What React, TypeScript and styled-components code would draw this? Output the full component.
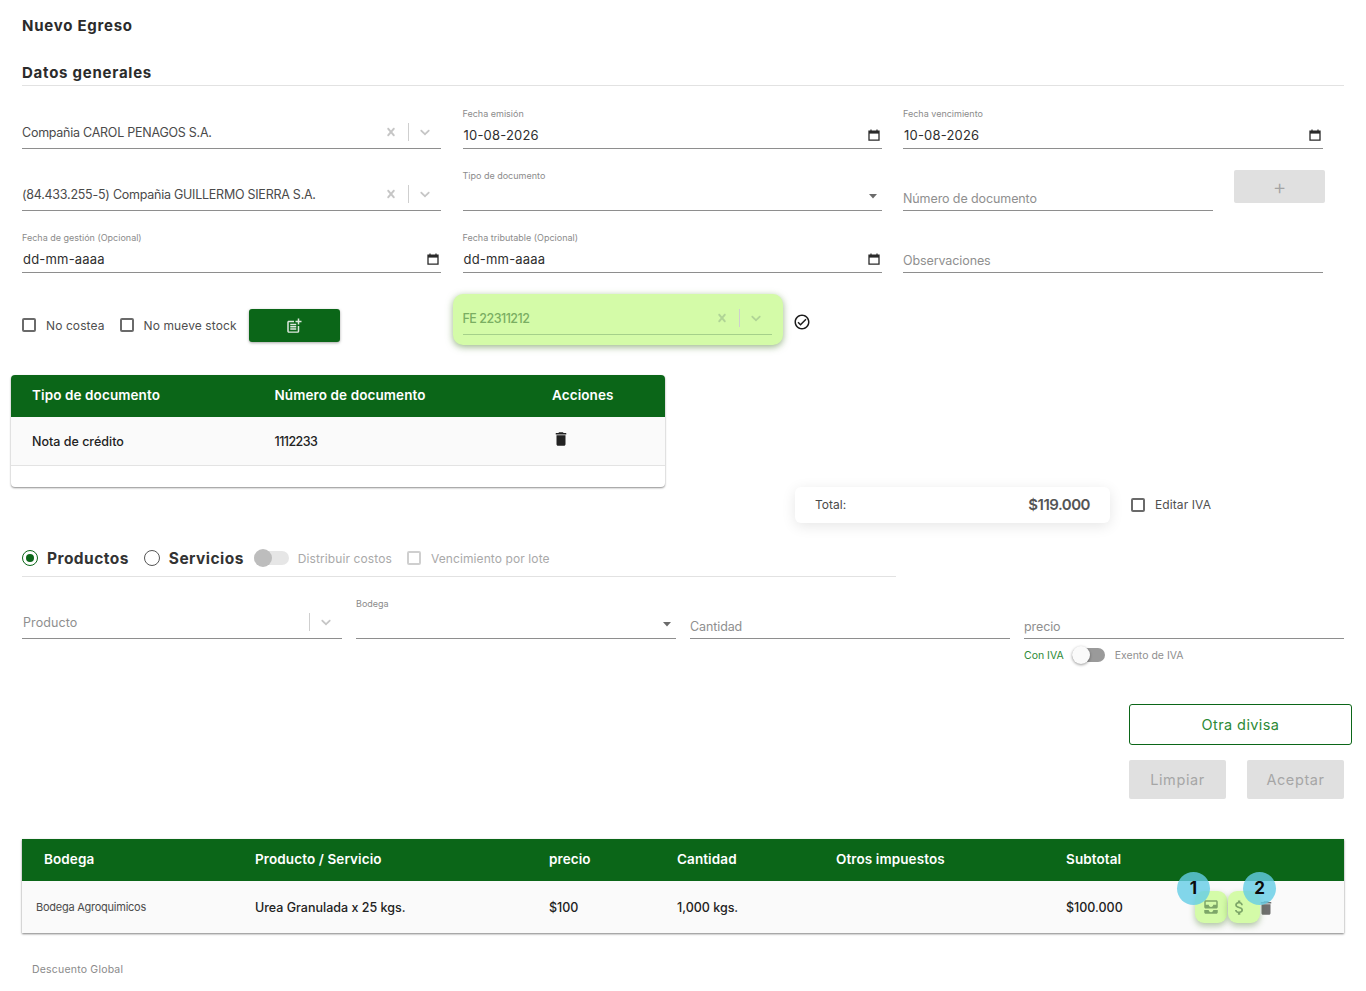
import type { ReactNode } from 'react'
import styled, { createGlobalStyle } from 'styled-components'
import {
  MdAllInbox,
  MdAttachMoney,
  MdDelete,
  MdOutlineCheckCircle,
  MdOutlinePostAdd
} from 'react-icons/md'

const green = '#0b6618'
const bodyFont = '"Inter", "Liberation Sans", sans-serif'

const GlobalStyle = createGlobalStyle`
  * {
    box-sizing: border-box;
  }
  html, body {
    margin: 0;
    height: 991px;
    overflow: hidden;
    background: #fff;
    font-family: ${bodyFont};
  }
`

const Page = styled.main`
  width: 1366px;
  padding: 0 22px;
  color: #333;
`

const PageTitle = styled.h1`
  margin: 0;
  padding-top: 17px;
  height: 65px;
  font-size: 15px;
  line-height: 18px;
  font-weight: 700;
  letter-spacing: 0.75px;
  color: #2b2b2b;
`

const SectionTitle = styled.h2`
  margin: 0;
  border-bottom: 1px solid #e2e2e2;
  height: 21px;
  font-size: 15px;
  line-height: 16px;
  font-weight: 700;
  letter-spacing: 0.75px;
  color: #2b2b2b;
`

const FormGrid = styled.div`
  display: grid;
  grid-template-columns: 419px 419px 420px;
  grid-auto-rows: 62px;
  column-gap: 21.5px;
  width: 1301px;
  margin-top: 1px;
`

const Field = styled.div`
  display: flex;
  flex-direction: column;
  justify-content: flex-end;
  min-width: 0;
`

const FieldLabel = styled.label`
  font-size: 9px;
  line-height: 11px;
  color: #8b8b8b;
  margin-bottom: 5px;
`

const Underlined = styled.div<{ $tall?: boolean; $low?: boolean; $line?: string }>`
  display: flex;
  align-items: center;
  justify-content: space-between;
  height: ${(p) => (p.$tall ? '33px' : '25px')};
  padding-bottom: ${(p) => (p.$tall || p.$low ? '0' : '3px')};
  padding-top: ${(p) => (p.$low ? '1px' : '0')};
  border-bottom: 1px solid ${(p) => p.$line ?? '#8e8e8e'};
  font-size: 12.5px;
`

const Value = styled.span`
  font-size: 13px;
  letter-spacing: 0.2px;
  color: #2e2e2e;
  padding-left: 1px;
`

const SelectText = styled.span`
  font-size: 12.5px;
  letter-spacing: -0.25px;
  color: #4a4a4a;
`

const Placeholder = styled.span`
  font-size: 12.5px;
  letter-spacing: -0.1px;
  color: #8f8f8f;
`

const SelectPlaceholder = styled(Placeholder)`
  padding-left: 1px;
  letter-spacing: 0.1px;
`

const Indicators = styled.div<{ $tint?: string }>`
  display: flex;
  align-items: center;
  color: ${(p) => p.$tint ?? '#c6c6c6'};
  padding-right: 8px;
`

const Separator = styled.span`
  width: 1px;
  height: 18px;
  margin: 0 8px 0 9px;
  background: #cfcfcf;
`

const DocRow = styled.div`
  display: flex;
  align-items: flex-end;
  gap: 21px;
`

const GrowField = styled(Field)`
  flex: 0 0 310px;
  height: 62px;
`

const AddButton = styled.button`
  flex: none;
  width: 91px;
  height: 33px;
  margin-bottom: 8px;
  border: 0;
  border-radius: 2px;
  background: #e0e0e0;
  color: #a3a3a3;
  font-family: ${bodyFont};
  font-size: 21px;
  font-weight: 300;
  line-height: 1;
  padding: 0;
`

const ChecksCell = styled.div`
  display: flex;
  align-items: flex-start;
  padding-top: 36px;
`

const CheckLabel = styled.label<{ $muted?: boolean }>`
  display: inline-flex;
  align-items: center;
  height: 33px;
  padding-bottom: 1px;
  font-size: 12px;
  letter-spacing: 0.1px;
  color: ${(p) => (p.$muted ? '#a9a9a9' : '#4f4f4f')};
`

const Box = styled.span<{ $muted?: boolean }>`
  width: 14px;
  height: 14px;
  border: 2px solid ${(p) => (p.$muted ? '#cfcfcf' : '#6a6a6a')};
  border-radius: 2px;
  margin-right: 10px;
  flex: none;
`

const NoCostea = styled(CheckLabel)`
  margin-right: 15px;
`

const PostButton = styled.button`
  width: 91px;
  height: 33px;
  margin-left: 12px;
  border: 0;
  border-radius: 3px;
  background: ${green};
  color: #dfe9df;
  box-shadow: 0 1px 3px rgba(0, 0, 0, 0.35);
  display: flex;
  align-items: center;
  justify-content: center;
  padding: 0;
`

const InvoiceCell = styled.div`
  display: flex;
  align-items: flex-start;
  margin-left: -10px;
  padding-top: 21px;
  width: 370px;
  height: 102px;
`

const Highlight = styled.div`
  width: 330px;
  height: 51px;
  padding: 8px 11px 0 10px;
  border-radius: 10px;
  background: #d4fba8;
  box-shadow: 0 2px 7px rgba(70, 120, 40, 0.55);
`

const InvoiceText = styled.span`
  font-size: 12.5px;
  font-weight: 500;
  letter-spacing: -0.5px;
  color: #7aae62;
`

const CheckMark = styled.span`
  display: flex;
  margin: 19px 0 0 10px;
  color: #1d1d1d;
`

const DocTable = styled.section`
  width: 654px;
  height: 112px;
  margin: 40px 0 0 -11px;
  border-radius: 4px;
  overflow: hidden;
  background: #fff;
  box-shadow: 0 1px 2px rgba(0, 0, 0, 0.45);
`

const HeadRow = styled.div<{ $columns: string }>`
  display: grid;
  grid-template-columns: ${(p) => p.$columns};
  align-items: center;
  height: 42px;
  padding-bottom: 2px;
  background: ${green};
  color: #fff;
  font-size: 13.5px;
  font-weight: 600;
  letter-spacing: 0.1px;
`

const BodyRow = styled.div<{ $columns: string; $height: number; $rule?: boolean }>`
  display: grid;
  grid-template-columns: ${(p) => p.$columns};
  align-items: center;
  height: ${(p) => p.$height}px;
  background: #fafafa;
  border-bottom: ${(p) => (p.$rule ? '1px solid #e3e3e3' : '0')};
  color: #222;
  font-size: 12.5px;
  font-weight: 500;
`

const Cell = styled.span`
  white-space: nowrap;
`

const NumberCell = styled(Cell)`
  letter-spacing: -0.55px;
`

const BinIcon = styled.span`
  display: flex;
  margin: -4px 0 0 0;
  color: #222;
`

const TotalRow = styled.div`
  display: flex;
  align-items: center;
  margin-left: 773px;
  height: 36px;
`

const TotalCard = styled.div`
  display: flex;
  align-items: center;
  justify-content: space-between;
  width: 315px;
  height: 36px;
  padding: 0 20px 1px;
  margin-right: 21px;
  border-radius: 6px;
  background: #fff;
  box-shadow: 0 3px 14px rgba(0, 0, 0, 0.1);
  font-size: 12px;
  color: #4a4a4a;
`

const TotalAmount = styled.strong`
  font-size: 15px;
  font-weight: 600;
  letter-spacing: -0.5px;
  color: #555;
`

const ModeRow = styled.div`
  display: flex;
  align-items: center;
  width: 874px;
  height: 36px;
  margin-top: 18px;
  border-bottom: 1px solid #e2e2e2;
  padding-bottom: 1px;
`

const RadioOption = styled.label`
  display: inline-flex;
  align-items: center;
  gap: 9px;
  margin-right: 15px;
  font-size: 15.5px;
  font-weight: 700;
  letter-spacing: 0.45px;
  color: #333;
`

const Radio = styled.span<{ $on?: boolean }>`
  width: 16px;
  height: 16px;
  border-radius: 50%;
  border: 1.5px solid ${(p) => (p.$on ? green : '#555')};
  display: flex;
  align-items: center;
  justify-content: center;
  &::after {
    content: '';
    width: 8px;
    height: 8px;
    border-radius: 50%;
    background: ${(p) => (p.$on ? green : 'transparent')};
  }
`

const OffSwitch = styled.span`
  display: flex;
  align-items: center;
  width: 35px;
  height: 14px;
  margin: 0 9px 0 -5px;
  border-radius: 7px;
  background: #e6e6e6;
  &::before {
    content: '';
    width: 18px;
    height: 18px;
    border-radius: 50%;
    background: #bdbdbd;
  }
`

const MutedLabel = styled.span`
  font-size: 12px;
  letter-spacing: 0.1px;
  color: #a9a9a9;
  margin-right: 15px;
`

const ProductGrid = styled.div`
  display: grid;
  grid-template-columns: repeat(4, 320px);
  grid-auto-rows: 62px;
  column-gap: 14px;
`

const TaxRow = styled.div`
  display: flex;
  align-items: center;
  height: 18px;
  margin: 7px 0 0 1002px;
  font-size: 10.5px;
  color: #8f8f8f;
`

const TaxOn = styled.span`
  color: #2d8a36;
`

const TaxSwitch = styled.span`
  display: flex;
  align-items: center;
  justify-content: flex-start;
  width: 33px;
  height: 14px;
  margin: 0 10px 0 8px;
  border-radius: 7px;
  background: #9a9a9a;
  &::before {
    content: '';
    width: 18px;
    height: 18px;
    border-radius: 50%;
    background: #fafafa;
    box-shadow: 0 1px 3px rgba(0, 0, 0, 0.4);
  }
`

const OtherCurrency = styled.button`
  display: block;
  width: 223px;
  height: 41px;
  margin: 40px 0 0 1107px;
  padding-bottom: 2px;
  border: 1px solid ${green};
  border-radius: 3px;
  background: #fff;
  color: #2d8a36;
  font-family: ${bodyFont};
  font-size: 14.5px;
  letter-spacing: 0.4px;
`

const Actions = styled.div`
  display: flex;
  justify-content: flex-end;
  gap: 21px;
  margin-top: 15px;
`

const DisabledButton = styled.button`
  width: 97px;
  height: 39px;
  padding-bottom: 2px;
  border: 0;
  border-radius: 2px;
  background: #e0e0e0;
  color: #a6a6a6;
  font-family: ${bodyFont};
  font-size: 14.5px;
  letter-spacing: 0.6px;
`

const ItemsTable = styled.section`
  height: 94px;
  margin-top: 40px;
  background: #fafafa;
  box-shadow: 0 1px 2px rgba(0, 0, 0, 0.5);
`

const WarehouseCell = styled(Cell)`
  margin-left: -8px;
  font-size: 11px;
  font-weight: 400;
  letter-spacing: -0.25px;
  color: #4c4c4c;
`

const RowActions = styled.div`
  display: flex;
  align-items: center;
  gap: 1px;
`

const Spotlight = styled.span<{ $shift?: number }>`
  position: relative;
  display: flex;
  align-items: center;
  justify-content: center;
  width: 32px;
  height: 32px;
  padding-right: ${(p) => p.$shift ?? 0}px;
  border-radius: 9px;
  background: #d4fba8;
  color: #7da668;
  box-shadow: 0 3px 6px rgba(70, 120, 40, 0.4);
`

const StepBadge = styled.span<{ $left: number }>`
  position: absolute;
  top: -19px;
  left: ${(p) => p.$left}px;
  width: 33px;
  height: 33px;
  border-radius: 50%;
  background: rgba(100, 205, 230, 0.8);
  color: #0b0b0b;
  font-size: 17px;
  font-weight: 700;
  line-height: 33px;
  text-align: center;
`

const MutedBin = styled.span`
  display: flex;
  margin: 1px 0 0 -4px;
  color: #6f6f6f;
`

const Discount = styled.p`
  margin: 30px 0 0 10px;
  font-size: 10.5px;
  line-height: 13px;
  letter-spacing: 0.2px;
  color: #8a8a8a;
`

const CalendarSvg = styled.svg`
  margin-right: 2px;
  flex: none;
`

const CaretSvg = styled.svg`
  margin-right: 4px;
  flex: none;
`

const CalendarIcon = () => (
  <CalendarSvg width="12" height="12" viewBox="0 0 12 12" fill="none">
    <path d="M1 2.2h10v9H1z" stroke="#2a2a2a" strokeWidth="1.3" />
    <path d="M1 2h10v2.6H1z" fill="#2a2a2a" />
    <path d="M3 .6v2M9 .6v2" stroke="#2a2a2a" strokeWidth="1.2" />
  </CalendarSvg>
)

const ClearIcon = () => (
  <svg width="16" height="16" viewBox="0 0 20 20" fill="currentColor">
    <path d="M14.348 14.849c-0.469 0.469-1.229 0.469-1.697 0l-2.651-3.030-2.651 3.029c-0.469 0.469-1.229 0.469-1.697 0-0.469-0.469-0.469-1.229 0-1.697l2.758-3.15-2.759-3.152c-0.469-0.469-0.469-1.228 0-1.697s1.228-0.469 1.697 0l2.652 3.031 2.651-3.031c0.469-0.469 1.228-0.469 1.697 0s0.469 1.229 0 1.697l-2.758 3.152 2.758 3.15c0.469 0.469 0.469 1.229 0 1.698z" />
  </svg>
)

const ChevronIcon = () => (
  <svg width="16" height="16" viewBox="0 0 20 20" fill="currentColor">
    <path d="M4.516 7.548c0.436-0.446 1.043-0.481 1.576 0l3.908 3.747 3.908-3.747c0.533-0.481 1.141-0.446 1.574 0 0.436 0.445 0.408 1.197 0 1.615-0.406 0.418-4.695 4.502-4.695 4.502-0.217 0.223-0.502 0.335-0.787 0.335s-0.57-0.112-0.789-0.335c0 0-4.287-4.084-4.695-4.502s-0.436-1.17 0-1.615z" />
  </svg>
)

const CaretIcon = () => (
  <CaretSvg width="10" height="5" viewBox="0 0 10 5" fill="#6b6b6b">
    <path d="M1 0h8L5 4.5z" />
  </CaretSvg>
)

function DateField ({ label, value }: { label: string; value: string }) {
  return (
    <Field>
      <FieldLabel>{label}</FieldLabel>
      <Underlined>
        <Value>{value}</Value>
        <CalendarIcon />
      </Underlined>
    </Field>
  )
}

function SearchSelect ({ children, clearable }: { children: ReactNode; clearable?: boolean }) {
  return (
    <Field>
      <Underlined $tall>
        {children}
        <Indicators>
          {clearable && <ClearIcon />}
          <Separator />
          <ChevronIcon />
        </Indicators>
      </Underlined>
    </Field>
  )
}

function NativeSelect ({ label }: { label: string }) {
  return (
    <Field>
      <FieldLabel>{label}</FieldLabel>
      <Underlined>
        <span />
        <CaretIcon />
      </Underlined>
    </Field>
  )
}

function TextField ({ placeholder }: { placeholder: string }) {
  return (
    <Field>
      <Underlined $low>
        <Placeholder>{placeholder}</Placeholder>
      </Underlined>
    </Field>
  )
}

const docColumns = '21px 242.5px 277.5px 1fr'
const itemColumns = '22px 211px 294px 128px 159px 230px 129px 1fr'

export default function App () {
  return (
    <Page>
      <GlobalStyle />
      <PageTitle>Nuevo Egreso</PageTitle>
      <SectionTitle>Datos generales</SectionTitle>

      <FormGrid>
        <SearchSelect clearable>
          <SelectText>Compañia CAROL PENAGOS S.A.</SelectText>
        </SearchSelect>
        <DateField label="Fecha emisión" value="10-08-2026" />
        <DateField label="Fecha vencimiento" value="10-08-2026" />

        <SearchSelect clearable>
          <SelectText>(84.433.255-5) Compañia GUILLERMO SIERRA S.A.</SelectText>
        </SearchSelect>
        <NativeSelect label="Tipo de documento" />
        <DocRow>
          <GrowField>
            <Underlined $low>
              <Placeholder>Número de documento</Placeholder>
            </Underlined>
          </GrowField>
          <AddButton>+</AddButton>
        </DocRow>

        <DateField label="Fecha de gestión (Opcional)" value="dd-mm-aaaa" />
        <DateField label="Fecha tributable (Opcional)" value="dd-mm-aaaa" />
        <TextField placeholder="Observaciones" />

        <ChecksCell>
          <NoCostea><Box />No costea</NoCostea>
          <CheckLabel><Box />No mueve stock</CheckLabel>
          <PostButton><MdOutlinePostAdd size={18} /></PostButton>
        </ChecksCell>
        <InvoiceCell>
          <Highlight>
            <Field>
              <Underlined $tall $line="#a5d08a">
                <InvoiceText>FE 22311212</InvoiceText>
                <Indicators $tint="#b0d496">
                  <ClearIcon />
                  <Separator />
                  <ChevronIcon />
                </Indicators>
              </Underlined>
            </Field>
          </Highlight>
          <CheckMark><MdOutlineCheckCircle size={18} /></CheckMark>
        </InvoiceCell>
      </FormGrid>

      <DocTable>
        <HeadRow $columns={docColumns}>
          <span />
          <Cell>Tipo de documento</Cell>
          <Cell>Número de documento</Cell>
          <Cell>Acciones</Cell>
        </HeadRow>
        <BodyRow $columns={docColumns} $height={49} $rule>
          <span />
          <Cell>Nota de crédito</Cell>
          <NumberCell>1112233</NumberCell>
          <BinIcon><MdDelete size={18} /></BinIcon>
        </BodyRow>
      </DocTable>

      <TotalRow>
        <TotalCard>
          <span>Total:</span>
          <TotalAmount>$119.000</TotalAmount>
        </TotalCard>
        <CheckLabel><Box />Editar IVA</CheckLabel>
      </TotalRow>

      <ModeRow>
        <RadioOption><Radio $on />Productos</RadioOption>
        <RadioOption><Radio />Servicios</RadioOption>
        <OffSwitch />
        <MutedLabel>Distribuir costos</MutedLabel>
        <Box $muted />
        <MutedLabel>Vencimiento por lote</MutedLabel>
      </ModeRow>

      <ProductGrid>
        <SearchSelect>
          <SelectPlaceholder>Producto</SelectPlaceholder>
        </SearchSelect>
        <NativeSelect label="Bodega" />
        <TextField placeholder="Cantidad" />
        <TextField placeholder="precio" />
      </ProductGrid>

      <TaxRow>
        <TaxOn>Con IVA</TaxOn>
        <TaxSwitch />
        <span>Exento de IVA</span>
      </TaxRow>

      <OtherCurrency>Otra divisa</OtherCurrency>
      <Actions>
        <DisabledButton>Limpiar</DisabledButton>
        <DisabledButton>Aceptar</DisabledButton>
      </Actions>

      <ItemsTable>
        <HeadRow $columns={itemColumns}>
          <span />
          <Cell>Bodega</Cell>
          <Cell>Producto / Servicio</Cell>
          <Cell>precio</Cell>
          <Cell>Cantidad</Cell>
          <Cell>Otros impuestos</Cell>
          <Cell>Subtotal</Cell>
        </HeadRow>
        <BodyRow $columns={itemColumns} $height={52}>
          <span />
          <WarehouseCell>Bodega Agroquimicos</WarehouseCell>
          <Cell>Urea Granulada x 25 kgs.</Cell>
          <Cell>$100</Cell>
          <Cell>1,000 kgs.</Cell>
          <span />
          <Cell>$100.000</Cell>
          <RowActions>
            <Spotlight>
              <MdAllInbox size={18} />
              <StepBadge $left={-18}>1</StepBadge>
            </Spotlight>
            <Spotlight $shift={10}>
              <MdAttachMoney size={19} />
              <StepBadge $left={15}>2</StepBadge>
            </Spotlight>
            <MutedBin><MdDelete size={18} /></MutedBin>
          </RowActions>
        </BodyRow>
      </ItemsTable>

      <Discount>Descuento Global</Discount>
    </Page>
  )
}
